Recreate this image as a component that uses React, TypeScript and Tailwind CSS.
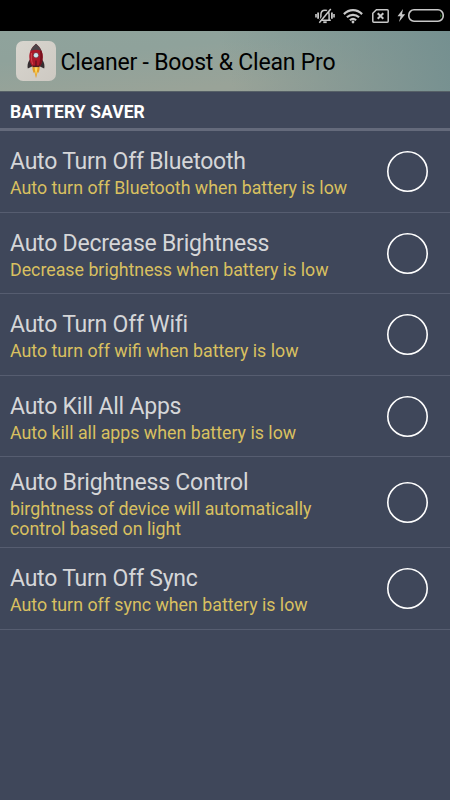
import { useState } from "react";

const settings = [
  {
    id: "bluetooth",
    title: "Auto Turn Off Bluetooth",
    summary: "Auto turn off Bluetooth when battery is low",
    height: "h-[82px]",
  },
  {
    id: "brightness",
    title: "Auto Decrease Brightness",
    summary: "Decrease brightness when battery is low",
    height: "h-[81px]",
  },
  {
    id: "wifi",
    title: "Auto Turn Off Wifi",
    summary: "Auto turn off wifi when battery is low",
    height: "h-[82px]",
  },
  {
    id: "apps",
    title: "Auto Kill All Apps",
    summary: "Auto kill all apps when battery is low",
    height: "h-[81px]",
  },
  {
    id: "control",
    title: "Auto Brightness Control",
    summary: "birghtness of device will automatically control based on light",
    height: "h-[91px]",
  },
  {
    id: "sync",
    title: "Auto Turn Off Sync",
    summary: "Auto turn off sync when battery is low",
    height: "h-[82px]",
  },
];

function StatusBar() {
  return (
    <div className="flex h-[31px] items-center justify-end bg-black pr-[6px]">
      {/* Vibrate */}
      <svg width="20" height="18" viewBox="0 0 20 18" fill="none" stroke="#c8c8c8" strokeWidth="1.5">
        <path d="M4.2 13.3h11.6M5.9 12.8V7.8C5.9 5 7.6 3.2 10 3.2s4.1 1.8 4.1 4.6v5" />
        <path d="M8.3 15.2h3.4" strokeWidth="1.8" />
        <path d="M3.1 5.4v6.4M16.9 5.4v6.4" strokeWidth="1.8" />
        <path d="M1 7v3.4M19 7v3.4" strokeWidth="1.6" />
        <path d="M4.2 14.1 13.4 3" stroke="#000" strokeWidth="1.4" />
        <path d="M4.3 15.8 15.8 2" />
      </svg>
      {/* Wifi */}
      <svg className="ml-[8px]" width="20" height="16" viewBox="0 0 20 16" fill="none" stroke="#c8c8c8" strokeWidth="2.2">
        <path d="M.9 6.1C6.1.9 13.9.9 19.1 6.1" />
        <path d="M3.9 9.3c3.5-3.3 8.7-3.3 12.2 0" />
        <path d="M6.9 12.2c1.9-1.7 4.3-1.7 6.2 0" />
        <circle cx="10" cy="14" r="1.4" fill="#c8c8c8" stroke="none" />
      </svg>
      {/* No sim */}
      <svg className="ml-[9px]" width="17" height="14" viewBox="0 0 17 14" fill="none" stroke="#c8c8c8" strokeWidth="1.5">
        <path d="M4.4.8h10.8q1 0 1 1v10.4q0 1-1 1H1.8q-1 0-1-1V4.3z" />
        <path d="m5.7 4.3 5.6 5.4m0-5.4L5.7 9.7" strokeWidth="2" />
      </svg>
      <svg className="ml-[8px]" width="9" height="13" viewBox="0 0 9 13" fill="#c8c8c8">
        <path d="M6 0 .5 7.2h3.1L2 13l6.2-7.7H5z" />
      </svg>
      {/* Battery */}
      <svg className="ml-[2px]" width="36" height="13" viewBox="0 0 36 13" fill="none">
        <path d="M32.5 4.2q1.6 2.3 0 4.6z" fill="#2c8a22" />
        <rect x=".8" y=".8" width="34.4" height="11.4" rx="5.2" stroke="#c8c8c8" strokeWidth="1.6" />
      </svg>
    </div>
  );
}

function RocketIcon() {
  return (
    <div className="flex h-10 w-10 items-center justify-center rounded-[7px] bg-linear-to-br from-[#d8d5ce] to-[#cdc9c2]">
      <svg width="18" height="36" viewBox="0 0 18 36">
        <path d="M3.6 15.5C1.4 18.2-.1 21.6.8 25.4l5.8-2.7zM14.4 15.5c2.2 2.7 3.7 6.1 2.8 9.9l-5.8-2.7z" fill="#352d30" />
        <path d="M5.6 22.6c-.5 3.2 0 5.2 1.2 7.4l.7-.9L9 35.2l1.6-6.1.7.9c1.2-2.3 1.6-4.4 1.1-7.4z" fill="#e39a25" />
        <path d="M7.5 24 9 33l1.7-9z" fill="#f8dc62" />
        <path d="M9 .8C4.7 4.4 2.2 8.7 2.3 14c.1 4.2 1.3 7.3 3 9.3h7.4c1.7-2 2.9-5.1 3-9.3C15.8 8.7 13.3 4.4 9 .8z" fill="#ab1829" />
        <path d="M9 .8C6.2 3 4.5 5.2 3.4 8.1q5.6-2.6 11.2 0C13.5 5.2 11.8 3 9 .8z" fill="#4a4448" />
        <path d="M13 7.4c.9 6 0 11.8-1.4 15.9h1.1c1.7-2 2.9-5.1 3-9.3 0-2.2-.4-4.2-1.1-5.9z" fill="#76101d" />
        <path d="M4.6 10c-.6 4-.2 8 1.1 11.4" stroke="#cf474e" strokeWidth="1" fill="none" />
        <circle cx="9" cy="12.2" r="3" fill="#80404a" />
        <circle cx="9" cy="12.2" r="2.2" fill="#cae5ed" />
        <path d="M5.6 22.6h6.8v1.5H5.6z" fill="#4c2024" />
        <path d="M9 17.5v6" stroke="#56101b" strokeWidth="1.2" />
      </svg>
    </div>
  );
}

export default function App() {
  const [enabled, setEnabled] = useState<string[]>([]);

  const toggle = (id: string) => {
    setEnabled((prev) =>
      prev.includes(id) ? prev.filter((item) => item !== id) : [...prev, id]
    );
  };

  return (
    <div className="h-[800px] w-[450px] overflow-hidden bg-[#3f475a] font-['Roboto',sans-serif]">
      <StatusBar />

      {/* Header */}
      <header className="flex h-[60px] items-center bg-[linear-gradient(175deg,#8fa39c_0%,#8fa29b_30%,#99a398_75%,#99a198_100%)]">
        <div className="flex h-full w-full items-center bg-[linear-gradient(75deg,transparent_50%,#759090_100%)] pl-[15.5px]">
          <RocketIcon />
          <h1 className="mt-[4px] ml-[5px] text-[23px] leading-[26px] tracking-[-0.2px] whitespace-nowrap text-black">
            Cleaner - Boost &amp; Clean Pro
          </h1>
        </div>
      </header>

      <h2 className="flex h-[40px] items-center border-t border-b-[3px] border-t-[#566067] border-b-[#646a7b] pt-[3px] pl-[10px] text-[17.5px] leading-5 font-bold tracking-[0.08px] text-white">
        BATTERY SAVER
      </h2>

      {/* Settings */}
      <ul>
        {settings.map((item) => (
          <li
            key={item.id}
            className={`flex items-center border-b border-[#565d70] pr-[22px] pl-[10px] ${item.height}`}
          >
            <div className="w-[345px] pt-[6px]">
              <p className="pb-[4px] text-[23px] leading-[24px] tracking-[-0.22px] text-[#d5d6d8]">
                {item.title}
              </p>
              <p className="text-[17.8px] leading-[20.5px] text-[#d9c060]">{item.summary}</p>
            </div>
            <button
              role="checkbox"
              aria-checked={enabled.includes(item.id)}
              aria-label={item.title}
              onClick={() => toggle(item.id)}
              className="ml-auto"
            >
              <svg width="41" height="41" viewBox="0 0 41 41" fill="none">
                <circle cx="20.5" cy="20.5" r="19.7" stroke="#fff" strokeWidth="1.6" />
                {enabled.includes(item.id) && <circle cx="20.5" cy="20.5" r="12" fill="#fff" />}
              </svg>
            </button>
          </li>
        ))}
      </ul>
    </div>
  );
}
